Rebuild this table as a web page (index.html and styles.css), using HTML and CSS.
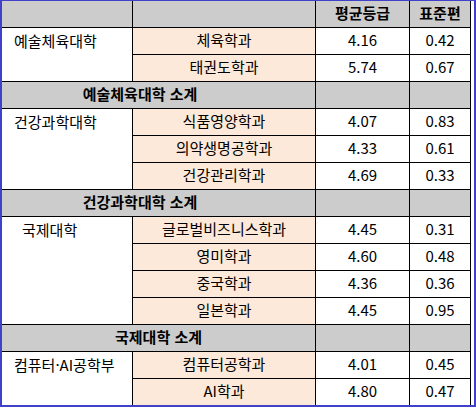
FILE: index.html
```html
<!DOCTYPE html>
<html lang="ko">
<head>
<meta charset="utf-8">
<link rel="stylesheet" href="styles.css">
</head>
<body>
<div class="frame">
<table class="grid">
<colgroup><col class="c1"><col class="c2"><col class="c3"><col class="c4"></colgroup>
<tr class="head">
<td></td><td></td><td class="hd">평균등급</td><td class="hd"><div class="wrap">표준편차</div></td>
</tr>
<tr><td class="college" rowspan="2">예술체육대학</td><td class="dept">체육학과</td><td class="num">4.16</td><td class="num">0.42</td></tr>
<tr><td class="dept">태권도학과</td><td class="num">5.74</td><td class="num">0.67</td></tr>
<tr class="sub"><td colspan="2" class="subt shift">예술체육대학 소계</td><td></td><td></td></tr>
<tr><td class="college" rowspan="3">건강과학대학</td><td class="dept">식품영양학과</td><td class="num">4.07</td><td class="num">0.83</td></tr>
<tr><td class="dept">의약생명공학과</td><td class="num">4.33</td><td class="num">0.61</td></tr>
<tr><td class="dept">건강관리학과</td><td class="num">4.69</td><td class="num">0.33</td></tr>
<tr class="sub"><td colspan="2" class="subt shift">건강과학대학 소계</td><td></td><td></td></tr>
<tr><td class="college indent" rowspan="4">국제대학</td><td class="dept">글로벌비즈니스학과</td><td class="num">4.45</td><td class="num">0.31</td></tr>
<tr><td class="dept">영미학과</td><td class="num">4.60</td><td class="num">0.48</td></tr>
<tr><td class="dept">중국학과</td><td class="num">4.36</td><td class="num">0.36</td></tr>
<tr><td class="dept">일본학과</td><td class="num">4.45</td><td class="num">0.95</td></tr>
<tr class="sub"><td colspan="2" class="subt">국제대학 소계</td><td></td><td></td></tr>
<tr><td class="college" rowspan="2">컴퓨터·AI공학부</td><td class="dept">컴퓨터공학과</td><td class="num">4.01</td><td class="num">0.45</td></tr>
<tr><td class="dept">AI학과</td><td class="num">4.80</td><td class="num">0.47</td></tr>
</table>
</div>
</body>
</html>
```
FILE: styles.css
```css
html, body {
  margin: 0;
  padding: 0;
  background: #fff;
}
.frame {
  box-sizing: border-box;
  width: 476px;
  height: 407px;
  border-style: solid;
  border-color: #4040c8;
  border-width: 1px 2px 2px 2px;
  overflow: hidden;
  background: #fff;
}
.grid {
  border-collapse: separate;
  border-spacing: 0;
  table-layout: fixed;
  width: 469px;
  font-family: "Noto Sans CJK KR", "Noto Sans", sans-serif;
  font-size: 15px;
  color: #000;
}
.c1 { width: 131px; }
.c2 { width: 183px; }
.c3 { width: 94px; }
.c4 { width: 61px; }
.grid td {
  box-sizing: border-box;
  height: 27px;
  padding: 0 0 3px 0;
  border-right: 1px solid #000;
  border-bottom: 1px solid #000;
  line-height: 23px;
  vertical-align: middle;
  white-space: nowrap;
  text-align: center;
}
.head td {
  background: #cccccc;
}
.hd {
  font-weight: bold;
}
.grid td.hd {
  vertical-align: top;
  padding: 0;
}
.wrap {
  width: 48px;
  margin: 0 auto;
  height: 26px;
  overflow: hidden;
  white-space: normal;
  line-height: 21px;
  padding-top: 1px;
  box-sizing: border-box;
}
.grid td.college {
  background: #fff;
  text-align: left;
  vertical-align: top;
  padding: 1px 0 0 12px;
}
.grid td.indent {
  padding-left: 20px;
}
.dept {
  background: #fde9d9;
}
.num {
  background: #fff;
}
.sub td {
  background: #cccccc;
}
.subt {
  font-weight: bold;
}
.grid td.shift {
  padding-right: 37px;
}
```
